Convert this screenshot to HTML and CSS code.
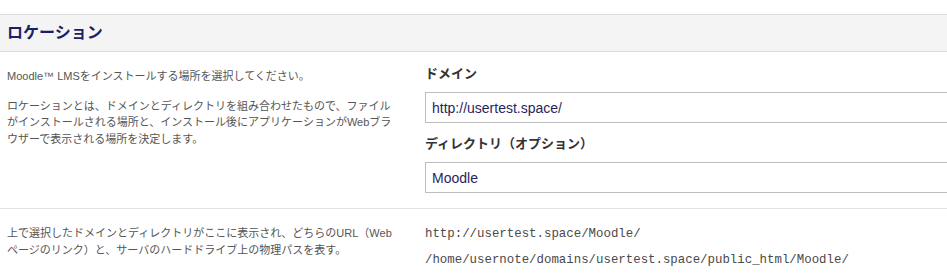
FILE: index.html
```html
<!DOCTYPE html>
<html lang="ja">
<head>
  <meta charset="UTF-8" />
  <meta name="viewport" content="width=device-width, initial-scale=1.0" />
  <title>ロケーション</title>
  <link rel="stylesheet" href="styles.css">
</head>
<body>
  <section class="loc-section">
    <header class="loc-header">
      <h2>ロケーション</h2>
    </header>

    <div class="loc-row loc-row-form">
      <div class="loc-desc">
        <p>Moodle™ LMSをインストールする場所を選択してください。</p>
        <p>ロケーションとは、ドメインとディレクトリを組み合わせたもので、ファイルがインストールされる場所と、インストール後にアプリケーションがWebブラウザーで表示される場所を決定します。</p>
      </div>
      <div class="loc-fields">
        <label class="loc-label" for="domain">ドメイン</label>
        <input class="loc-input" id="domain" type="text" value="http://usertest.space/">
        <label class="loc-label loc-label-second" for="dir">ディレクトリ（オプション）</label>
        <input class="loc-input" id="dir" type="text" value="Moodle">
      </div>
    </div>

    <div class="loc-row loc-row-result">
      <div class="loc-desc">
        <p>上で選択したドメインとディレクトリがここに表示され、どちらのURL（Webページのリンク）と、サーバのハードドライブ上の物理パスを表す。</p>
      </div>
      <div class="loc-paths">
        <div class="loc-path">http://usertest.space/Moodle/</div>
        <div class="loc-path">/home/usernote/domains/usertest.space/public_html/Moodle/</div>
      </div>
    </div>
  </section>
</body>
</html>
```

FILE: styles.css
```css
:root {
  --border-color: #dcdcdc;
  --header-bg: #f4f4f4;
  --title-color: #1e1e66;
  --text-muted: #555;
  --text-dark: #333;
  --input-border: #bdbdbd;
}

* {
  margin: 0;
  padding: 0;
  box-sizing: border-box;
}

html, body {
  overflow: hidden;
}

body {
  font-family: 'Liberation Sans', 'Noto Sans CJK JP', sans-serif;
  background: #fff;
  color: var(--text-dark);
}

.loc-section {
  margin-top: 14px;
}

.loc-header {
  background: var(--header-bg);
  border-top: 1px solid var(--border-color);
  border-bottom: 1px solid var(--border-color);
  height: 38px;
  padding: 0 7px;
  display: flex;
  align-items: center;
}

.loc-header h2 {
  font-size: 16px;
  font-weight: 700;
  color: var(--title-color);
  line-height: 1;
}

.loc-row {
  display: grid;
  grid-template-columns: 425px 1fr;
}

.loc-row-form {
  padding: 13px 0 15px;
  border-bottom: 1px solid #e3e3e3;
}

.loc-desc {
  padding-left: 7px;
  width: 396px;
  font-size: 11px;
  line-height: 16.5px;
  color: var(--text-muted);
}

.loc-row-form .loc-desc {
  padding-top: 3px;
}

.loc-desc p + p {
  margin-top: 13px;
}

.loc-fields {
  display: flex;
  flex-direction: column;
  align-items: flex-start;
}

.loc-label {
  font-size: 13px;
  font-weight: 700;
  line-height: 18px;
  color: var(--text-dark);
  margin-bottom: 9px;
}

.loc-label-second {
  margin-top: 12px;
}

.loc-input {
  width: 560px;
  height: 31px;
  border: 1px solid var(--input-border);
  padding: 0 6px;
  font-family: 'Liberation Sans', sans-serif;
  font-size: 14px;
  color: #2a1f5e;
  background: #fff;
  outline: none;
}

.loc-row-result .loc-desc {
  padding-top: 16px;
  line-height: 17px;
}

.loc-paths {
  padding-top: 12px;
}

.loc-path {
  font-family: 'Liberation Mono', monospace;
  font-size: 12.4px;
  line-height: 26px;
  color: #4a4a4a;
}
```
